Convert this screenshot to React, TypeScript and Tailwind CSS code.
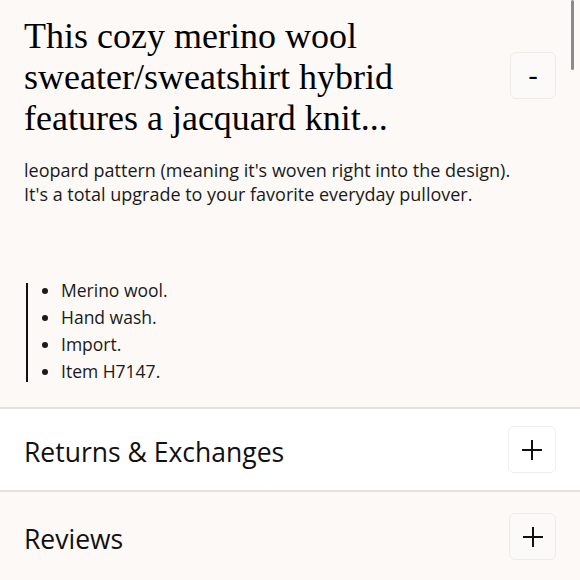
import React from 'react';

const sans = { fontFamily: '"Open Sans", "Noto Sans", sans-serif' };

function PlusIcon() {
  return (
    <svg width="22" height="22" viewBox="0 0 22 22" fill="none" stroke="#111" strokeWidth="2">
      <line x1="11" y1="1" x2="11" y2="21" />
      <line x1="1" y1="11" x2="21" y2="11" />
    </svg>
  );
}

export default function App() {
  const bullets = ['Merino wool.', 'Hand wash.', 'Import.', 'Item H7147.'];

  return (
    <div className="relative h-[580px] w-full overflow-hidden bg-[#fcf9f6] text-[#111]" style={sans}>
      {/* description, open */}
      <section className="px-6 pt-[16px] pb-[25px] border-b-2 border-[#e4e2df]">
        <div className="flex items-center justify-between gap-10">
          <h2 className="flex-1 font-['Liberation_Serif',serif] text-[36px] leading-[41px] text-black">
            This cozy merino wool sweater/sweatshirt hybrid features a jacquard knit...
          </h2>
          <button className="mb-[5px] flex h-[47px] w-[46px] shrink-0 items-center justify-center rounded-md border border-[#efebe8] bg-[#fcfaf8] text-[30px] leading-none text-black">
            -
          </button>
        </div>
        <p className="mt-[19px] text-[18px] leading-[24px] text-[#1a1a1a]">
          leopard pattern (meaning it's woven right into the design).
          <br />
          It's a total upgrade to your favorite everyday pullover.
        </p>
        <ul className="mt-[77px] ml-[2px] border-l-2 border-[#111] pb-[4px] pl-[33px] list-disc text-[17.5px] leading-[14px] space-y-[13px] text-[#1a1a1a]">
          {bullets.map((b) => (
            <li key={b}>{b}</li>
          ))}
        </ul>
      </section>

      {/* returns */}
      <section className="flex items-center justify-between bg-white px-6 py-[17px] border-b-2 border-[#e4e2df]">
        <h3 className="pt-[4px] text-[26.5px] leading-[32px]">Returns &amp; Exchanges</h3>
        <button className="flex h-[47px] w-[48px] items-center justify-center rounded-md border border-[#eeeeee] bg-white">
          <PlusIcon />
        </button>
      </section>

      {/* reviews */}
      <section className="flex items-center justify-between px-6 pt-[21px] pb-[17px]">
        <h3 className="pt-[4px] text-[26.5px] leading-[32px]">Reviews</h3>
        <button className="flex h-[47px] w-[47px] items-center justify-center rounded-md border border-[#efebe8] bg-[#fcfaf8]">
          <PlusIcon />
        </button>
      </section>

      {/* overlay scrollbar */}
      <div className="absolute right-[6px] top-0 h-[70px] w-[3px] rounded-full bg-[#8a8a8a]" />
    </div>
  );
}
